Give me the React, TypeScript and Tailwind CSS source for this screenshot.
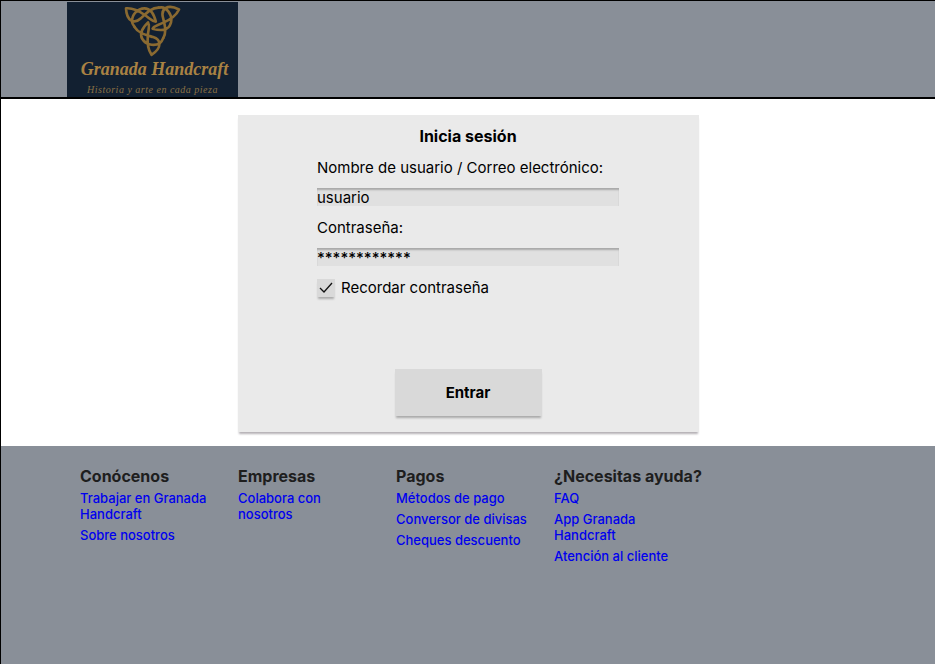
import { useState } from "react";

const footerColumns = [
  { title: "Conócenos", links: ["Trabajar en Granada Handcraft", "Sobre nosotros"] },
  { title: "Empresas", links: ["Colabora con nosotros"] },
  { title: "Pagos", links: ["Métodos de pago", "Conversor de divisas", "Cheques descuento"] },
  { title: "¿Necesitas ayuda?", links: ["FAQ", "App Granada Handcraft", "Atención al cliente"] },
];

const knotStrand =
  "M32 22C54 20 72 30 90 43S110 62 122 62C116 38 106 22 88 22C66 22 50 42 50 62C50 68 54 73 58 78M32 22C34 62 58 70 76 53C92 38 108 20 130 20";

function Knot() {
  return (
    <svg viewBox="27 12 170 160" className="h-[53px] w-[57px] shrink-0" fill="none" stroke="#8a6a31" strokeWidth="8" strokeLinejoin="round" strokeLinecap="round" aria-hidden="true">
      <path d={knotStrand} />
      <path d={knotStrand} transform="rotate(120 111 70)" />
      <path d={knotStrand} transform="rotate(240 111 70)" />
    </svg>
  );
}

function Logo() {
  return (
    <a href="#" className="flex h-[95px] w-[171px] flex-col items-center bg-[#122031] pt-[3px] whitespace-nowrap">
      <Knot />
      <span className="pl-1 font-['Liberation_Serif',serif] text-[18px] leading-[22px] font-bold text-[#a98243] italic">Granada Handcraft</span>
      <span className="pt-1 font-['Liberation_Serif',serif] text-[10px] leading-3 tracking-wider text-[#8a7044] italic">Historia y arte en cada pieza</span>
    </a>
  );
}

const fieldClass =
  "mt-[10px] block h-[18px] w-full bg-[#e0e0e0] pt-px text-[15px] leading-[17px] text-black outline-none shadow-[inset_0_3px_2px_-1px_#a8a8a8,inset_1px_0_1px_-1px_#bbbbbb,inset_-1px_0_1px_-1px_#bbbbbb]";

export default function App() {
  const [user, setUser] = useState("usuario");
  const [secret, setSecret] = useState("************");
  const [remember, setRemember] = useState(true);

  return (
    <div className="flex min-h-screen flex-col border-t border-l border-black bg-white font-['Inter',sans-serif] text-black">
      <header className="border-b-2 border-black bg-[#898f98] pt-px pl-[66px]">
        <Logo />
      </header>

      <main className="flex justify-center pt-4 pb-[14px]">
        <form
          onSubmit={(e) => e.preventDefault()}
          className="flex min-h-[317px] w-[461px] flex-col items-center bg-[#eaeaea] pt-[11px] shadow-[0_3px_2px_-1px_#b4b0b5]"
        >
          <h1 className="text-[16px] leading-5 font-bold">Inicia sesión</h1>
          <div className="mt-3 flex w-[302px] flex-col">
            <label htmlFor="user" className="text-[15px] leading-5 whitespace-nowrap">Nombre de usuario / Correo electrónico:</label>
            <input id="user" type="text" value={user} onChange={(e) => setUser(e.target.value)} className={fieldClass} />
            <label htmlFor="secret" className="mt-3 text-[15px] leading-5">Contraseña:</label>
            <input id="secret" type="text" value={secret} onChange={(e) => setSecret(e.target.value)} className={`${fieldClass} font-medium`} />
            <label className="mt-3 flex items-center gap-[6px] text-[15px] leading-5">
              <span className="grid size-[18px] place-items-center bg-[#d9d9d9] shadow-[0_3px_2px_-1px_#aaaaaa]">
                <input
                  type="checkbox"
                  checked={remember}
                  onChange={(e) => setRemember(e.target.checked)}
                  className="peer col-start-1 row-start-1 size-[18px] appearance-none"
                />
                <svg viewBox="0 0 18 18" className="pointer-events-none invisible col-start-1 row-start-1 size-[18px] peer-checked:visible" fill="none" stroke="#111" strokeWidth="1.3" aria-hidden="true">
                  <path d="M3 9l4 4 8-9" />
                </svg>
              </span>
              Recordar contraseña
            </label>
          </div>
          <button type="submit" className="mt-auto mb-4 h-[47px] w-[147px] bg-[#d9d9d9] pt-px text-[15px] font-bold shadow-[0_3px_2px_-1px_#aaaaaa]">
            Entrar
          </button>
        </form>
      </main>

      <footer className="flex flex-1 gap-6 bg-[#898f98] pt-[19px] pl-[79px]">
        {footerColumns.map((column) => (
          <section key={column.title} className="w-[134px]">
            <h2 className="text-[16px] leading-[22px] font-bold whitespace-nowrap text-[#1e1e1e]">{column.title}</h2>
            <ul className="mt-[3px] flex flex-col gap-[5px]">
              {column.links.map((link) => (
                <li key={link} className="text-[13px] leading-4 font-medium text-[#0000ee]">
                  <a href="#" className="block">{link}</a>
                </li>
              ))}
            </ul>
          </section>
        ))}
      </footer>
    </div>
  );
}
